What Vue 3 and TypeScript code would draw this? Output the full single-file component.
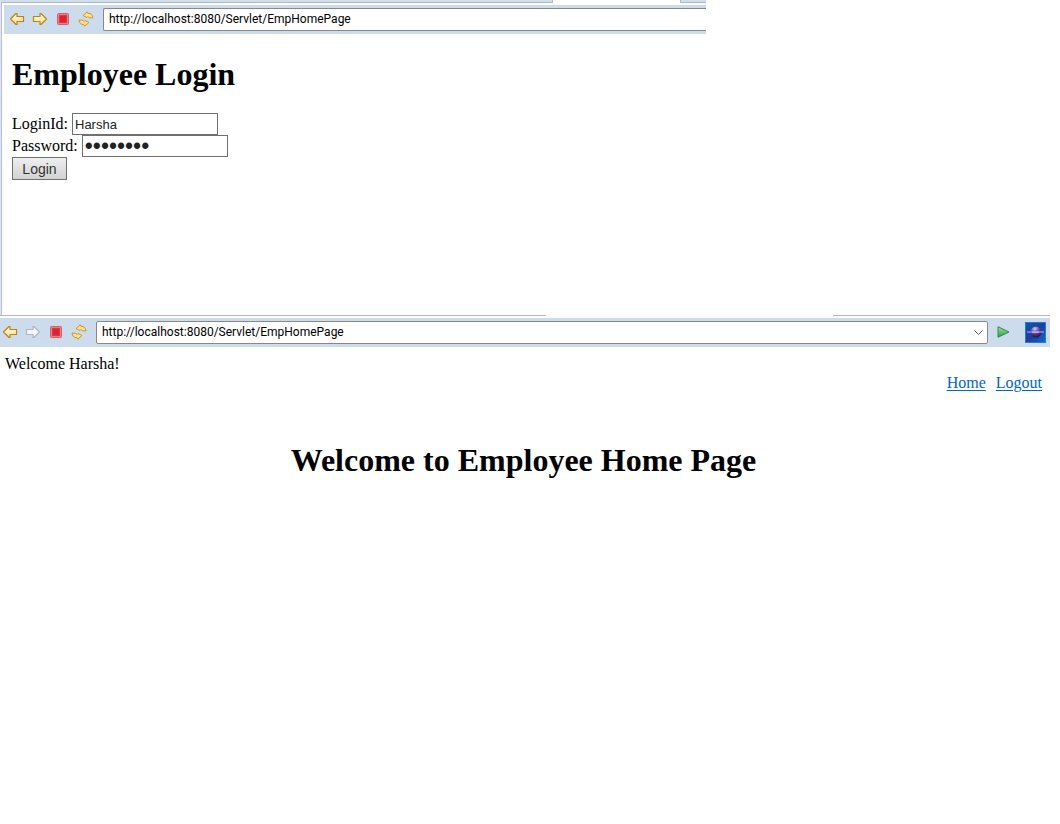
<script setup lang="ts">
import { ref } from 'vue'

const address = ref('http://localhost:8080/Servlet/EmpHomePage')
const loginId = ref('Harsha')
const password = ref('password')
const historyItems = [{ label: 'Back', active: true }, { label: 'Forward', active: true }]
const homeHistoryItems = [{ label: 'Back', active: true }, { label: 'Forward', active: false }]
const windows = { login: historyItems, home: homeHistoryItems }
</script>

<template>
  <svg class="defs" width="0" height="0" aria-hidden="true">
    <defs>
      <linearGradient id="gold" x1="0" y1="0" x2="0" y2="1">
        <stop offset="0" stop-color="#fffbe0" />
        <stop offset="1" stop-color="#ffe08a" />
      </linearGradient>
      <linearGradient id="green" x1="0" y1="0" x2="0" y2="1">
        <stop offset="0" stop-color="#a5dba0" />
        <stop offset="1" stop-color="#27a048" />
      </linearGradient>
      <linearGradient id="space" x1="0" y1="0" x2="1" y2="1">
        <stop offset="0" stop-color="#0a5ab8" />
        <stop offset="0.5" stop-color="#1c3f9c" />
        <stop offset="1" stop-color="#0d6cd0" />
      </linearGradient>
      <radialGradient id="planet" cx="0.4" cy="0.2" r="0.8">
        <stop offset="0" stop-color="#d8c4f4" />
        <stop offset="0.45" stop-color="#6a4ca6" />
        <stop offset="1" stop-color="#231050" />
      </radialGradient>
      <symbol id="arrow" viewBox="0 0 16 14">
        <path d="M1.5 7 7 1.5h1v3h6.5v5H8v3H7z" stroke-width="1.2" stroke-linejoin="round" />
      </symbol>
      <symbol id="stop" viewBox="0 0 12 12">
        <rect x="0.5" y="0.5" width="11" height="11" rx="1" fill="#ed8087" stroke="#d2606b" />
        <rect x="2.5" y="2.5" width="7" height="7" fill="#e3202f" stroke="#d63a48" />
      </symbol>
      <symbol id="refresh" viewBox="0 0 16 16">
        <g fill="#ffe08e" stroke="#cf952f" stroke-linejoin="round">
          <path d="M5 4.600 9.200.8l.8 1.500c2.900-.1 4.800 1.500 4.900 4.700l-3.800-.2-1.200-1.300-1 1z" />
          <path d="M5 4.600 9.200.8l.8 1.500c2.900-.1 4.800 1.500 4.900 4.700l-3.800-.2-1.200-1.300-1 1z" transform="rotate(180 8 8)" />
        </g>
      </symbol>
    </defs>
  </svg>

  <main class="screen">
    <section class="login-window" aria-label="Login window">
      <div class="tabs"><span class="tab-left"></span><span class="tab-right"></span></div>
      <div class="toolbar">
        <button v-for="(item, i) in windows.login" :key="item.label" type="button" class="tool" :aria-label="item.label">
          <svg class="arrow" :class="{ forward: i === 1, faded: !item.active }"><use href="#arrow" /></svg>
        </button>
        <button type="button" class="tool" aria-label="Stop"><svg class="stop"><use href="#stop" /></svg></button>
        <button type="button" class="tool" aria-label="Refresh"><svg class="refresh"><use href="#refresh" /></svg></button>
        <input v-model="address" class="address open" type="text" aria-label="Address" />
      </div>
      <form class="login-page" @submit.prevent>
        <h1>Employee Login</h1>
        <div class="field"><label for="login-id">LoginId:</label><input id="login-id" v-model="loginId" type="text" /></div>
        <div class="field"><label for="password">Password:</label><input id="password" v-model="password" type="password" /></div>
        <button class="submit" type="submit">Login</button>
      </form>
    </section>

    <section class="home-window" aria-label="Home window">
      <div class="edges"><span class="edge-left"></span><span class="edge-right"></span></div>
      <div class="toolbar home-bar">
        <button v-for="(item, i) in windows.home" :key="item.label" type="button" class="tool" :aria-label="item.label" :disabled="!item.active">
          <svg class="arrow" :class="{ forward: i === 1, faded: !item.active }"><use href="#arrow" /></svg>
        </button>
        <button type="button" class="tool" aria-label="Stop"><svg class="stop"><use href="#stop" /></svg></button>
        <button type="button" class="tool" aria-label="Refresh"><svg class="refresh"><use href="#refresh" /></svg></button>
        <select class="address" aria-label="Address">
          <option>{{ address }}</option>
        </select>
        <svg class="chevron" viewBox="0 0 9 6" aria-hidden="true"><path d="M.5.5l4 4 4-4" fill="none" stroke="#555" /></svg>
        <button type="button" class="go" aria-label="Go">
          <svg width="13" height="12" viewBox="0 0 13 12"><path d="M1 .7v10.600L12 6z" fill="url(#green)" stroke="#2f8c48" stroke-linejoin="round" /></svg>
        </button>
        <svg class="logo" viewBox="0 0 21 21" role="img" aria-label="Browser">
          <rect width="21" height="21" fill="url(#space)" />
          <rect x="0.5" y="0.5" width="20" height="20" fill="none" stroke="#2c78c8" />
          <circle cx="11" cy="10" r="5.500" fill="url(#planet)" />
          <path d="M2 10h17" stroke="#8d86dc" stroke-width="1.500" />
          <path d="M7 10.200h7" stroke="#d2c4f2" />
        </svg>
      </div>
      <div class="home-page">
        <p>Welcome Harsha!</p>
        <nav><a href="#home">Home</a><a href="#logout">Logout</a></nav>
        <h1>Welcome to Employee Home Page</h1>
      </div>
    </section>
  </main>
</template>

<style>
body {
  background: #fff;
}
</style>

<style scoped>
.screen {
  font: 16px/18px "Liberation Serif", serif;
  color: #000;
}
.defs {
  position: absolute;
}
.login-window {
  box-sizing: border-box;
  width: 66.6%;
  height: 315px;
  border-left: 1px solid #dce4f5;
  box-shadow: inset 1px 0 #b9bfd8;
}
.tabs {
  display: flex;
  justify-content: space-between;
  height: 3px;
}
.tabs span {
  box-sizing: border-box;
  background: #cfdded;
  border-bottom: 1px solid #b2b7cf;
}
.tab-left {
  width: 78.3%;
  border-right: 1px solid #b2b7cf;
}
.tab-right {
  width: 26px;
  border-left: 1px solid #b2b7cf;
}
.toolbar {
  box-sizing: border-box;
  display: flex;
  align-items: center;
  height: 29px;
  background: #cddced;
}
.login-window .toolbar {
  margin: 2px 0 0 3px;
  padding-left: 1px;
}
.tool,
.go {
  display: flex;
  align-items: center;
  justify-content: center;
  padding: 0 0 2px;
  border: 0;
  background: none;
}
.tool {
  flex: none;
  box-sizing: border-box;
  width: 23px;
  height: 22px;
}
.arrow {
  width: 16px;
  height: 14px;
  fill: url(#gold);
  stroke: #bd8118;
}
.forward {
  transform: scaleX(-1);
}
.faded {
  fill: #f4f5f7;
  stroke: #b0b4bb;
}
.stop {
  width: 12px;
  height: 12px;
}
.refresh {
  width: 16px;
  height: 16px;
}
.address {
  box-sizing: border-box;
  flex: 1;
  min-width: 0;
  height: 23px;
  margin-left: 6px;
  padding: 0 5px 1px;
  border: 1px solid #888;
  border-radius: 2px;
  outline: 0;
  appearance: none;
  background: #fff;
  color: #000;
  font: 12px Roboto, sans-serif;
}
.address.open {
  border-right: 0;
  border-radius: 2px 0 0 2px;
}
.login-page {
  padding: 22px 0 0 11px;
}
h1 {
  margin: 0;
  font-size: 32px;
  line-height: 36px;
}
.login-page h1 {
  margin-bottom: 21px;
}
.field {
  display: flex;
  align-items: center;
  gap: 4px;
  height: 22px;
}
.field input {
  box-sizing: border-box;
  width: 146px;
  height: 22px;
  padding: 0 2px;
  border: 1px solid #707070;
  border-radius: 0;
  outline: 0;
  background: #fff;
  color: #222;
  font: 13px "Liberation Sans", sans-serif;
}
.field input[type="password"] {
  font: 23px "Liberation Sans", sans-serif;
}
.submit {
  display: block;
  width: 55px;
  height: 23px;
  padding: 0;
  border: 1px solid #707070;
  background: linear-gradient(#efefef, #d2d2d2);
  color: #333;
  font: 14px "Liberation Sans", sans-serif;
}
.home-window {
  margin-right: 10px;
}
.edges {
  display: flex;
  justify-content: space-between;
  height: 3px;
}
.edges span {
  height: 1px;
  background: #b2b7cf;
}
.edge-left {
  width: 52%;
}
.edge-right {
  width: 217px;
}
.home-bar {
  padding-right: 4px;
}
.home-bar .tool:first-child {
  justify-content: flex-start;
  width: 19px;
  margin-left: 2px;
}
.chevron {
  flex: none;
  width: 9px;
  height: 6px;
  margin: 1px 5px 0 -14px;
  pointer-events: none;
}
.go {
  width: 31px;
  height: 22px;
}
.logo {
  flex: none;
  width: 21px;
  height: 21px;
  margin-left: 6px;
}
.home-page {
  padding: 8px 8px 0 5px;
}
.home-page p {
  margin: 0;
}
nav {
  display: flex;
  justify-content: flex-end;
  gap: 10px;
  margin-top: 1px;
}
nav a {
  color: #0066bf;
  text-underline-offset: 2px;
}
.home-page h1 {
  margin-top: 50px;
  text-align: center;
}
</style>
